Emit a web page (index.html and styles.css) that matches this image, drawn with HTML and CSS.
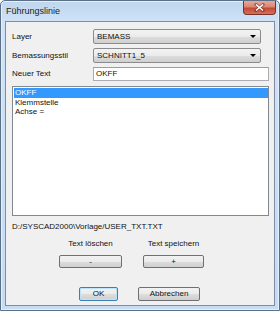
FILE: index.html
```html
<!DOCTYPE html>
<html>
<head>
<meta charset="utf-8">
<link rel="stylesheet" href="styles.css">
</head>
<body>
<div class="window">
  <div class="titlebar">
    <span class="title">Führungslinie</span>
    <div class="close"><svg width="11" height="9" viewBox="0 0 11 9"><path d="M2 1.5 L9 7.5 M9 1.5 L2 7.5" stroke="#5a1a12" stroke-width="3" stroke-linecap="square" opacity="0.5"/><path d="M2 1.5 L9 7.5 M9 1.5 L2 7.5" stroke="#ffffff" stroke-width="1.6"/></svg></div>
  </div>
  <div class="client">
    <div class="form">
      <label>Layer</label>
      <div class="combo"><span>BEMASS</span><i class="arrow"></i></div>
      <label>Bemassungsstil</label>
      <div class="combo"><span>SCHNITT1_5</span><i class="arrow"></i></div>
      <label>Neuer Text</label>
      <div class="input">OKFF</div>
    </div>
    <div class="list">
      <div class="item sel">OKFF</div>
      <div class="item">Klemmstelle</div>
      <div class="item">Achse =</div>
    </div>
    <div class="path">D:/SYSCAD2000\Vorlage/USER_TXT.TXT</div>
    <div class="tools">
      <div class="tool tool-del">
        <div class="tlabel">Text löschen</div>
        <div class="btn tbtn">-</div>
      </div>
      <div class="tool tool-save">
        <div class="tlabel">Text speichern</div>
        <div class="btn tbtn">+</div>
      </div>
    </div>
    <div class="actions">
      <div class="btn ok">OK</div>
      <div class="btn cancel">Abbrechen</div>
    </div>
  </div>
</div>
</body>
</html>
```
FILE: styles.css
```css
* { box-sizing: border-box; }
html, body { margin: 0; padding: 0; }
body {
  width: 280px; height: 311px; overflow: hidden;
  font-family: "Liberation Sans", Arial, sans-serif;
  font-size: 8px; color: #111;
  background: #ffffff;
}
.window {
  width: 280px; height: 311px;
  border: 1px solid #5b6f86;
  border-radius: 5px 5px 0 0;
  background: linear-gradient(#bfd6ee 0px, #cfe2f6 20px, #c6dcf3 100%);
  display: flex; flex-direction: column;
  box-shadow: inset 0 0 0 1px #e4eff9;
}
.titlebar {
  height: 19px; flex: none;
  display: flex; align-items: flex-start;
  padding-left: 5px;
}
.title {
  font-size: 9px; color: #1b1b1b;
  margin-top: 5px; line-height: 11px;
}
.close {
  margin-left: auto; margin-right: 3px;
  width: 33px; height: 14px;
  border: 1px solid #7a3328; border-top: none;
  border-radius: 0 0 4px 4px;
  background: linear-gradient(#e9a898 0%, #d98672 45%, #c24a35 55%, #d6705a 100%);
  display: flex; align-items: center; justify-content: center;
}
.close svg { display: block; }
.client {
  margin: 1px 4px 0 4px;
  height: 285px;
  border: 1px solid #7e8ea0;
  background: #f0f0f0;
  padding: 7px 5px 0 6px;
  display: flex; flex-direction: column;
}
.form {
  display: grid;
  grid-template-columns: 81px 1fr;
  grid-template-rows: 15px 15px 14px;
  row-gap: 4px;
  align-items: center;
}
.form label { line-height: 10px; }
.combo {
  height: 15px; margin-right: 8px;
  border: 1px solid #8c8c8c; border-radius: 2px;
  background: linear-gradient(#f3f3f3 0%, #ebebeb 50%, #dddddd 51%, #cfcfcf 100%);
  display: flex; align-items: center;
  padding: 0 4px 0 3px;
}
.combo span { flex: 1; line-height: 10px; }
.arrow {
  width: 0; height: 0;
  border-left: 3px solid transparent;
  border-right: 3px solid transparent;
  border-top: 3px solid #000;
}
.input {
  height: 14px;
  border: 1px solid #abadb3;
  border-top-color: #9a9da4;
  background: #fff;
  padding: 0 2px;
  line-height: 12px;
}
.list {
  margin-top: 5px;
  height: 130px;
  border: 1px solid #828790;
  background: #fff;
  padding: 1px 0 0 1px;
}
.item {
  height: 9.5px; line-height: 9.5px;
  padding-left: 1px;
}
.item.sel { background: #3399ff; color: #fff; }
.path {
  margin-top: 6px; line-height: 10px;
}
.tools {
  margin-top: 7px;
  display: flex;
  padding-left: 47px;
  gap: 21px;
}
.tool { display: flex; flex-direction: column; align-items: center; }
.tool-del { width: 63px; }
.tool-save { width: 61px; }
.tlabel { line-height: 10px; }
.btn {
  border: 1px solid #707070; border-radius: 2px;
  background: linear-gradient(#f2f2f2 0%, #ebebeb 50%, #dddddd 51%, #cfcfcf 100%);
  display: flex; align-items: center; justify-content: center;
  line-height: 10px;
}
.tbtn { margin-top: 6px; width: 100%; height: 13px; }
.actions {
  margin-top: 19px;
  display: flex;
  padding-left: 67px;
  gap: 20px;
}
.ok { width: 39px; height: 14px; border-color: #3c7fb1; box-shadow: inset 0 0 0 1px #bfe3f8; }
.cancel { width: 62px; height: 14px; }
```
